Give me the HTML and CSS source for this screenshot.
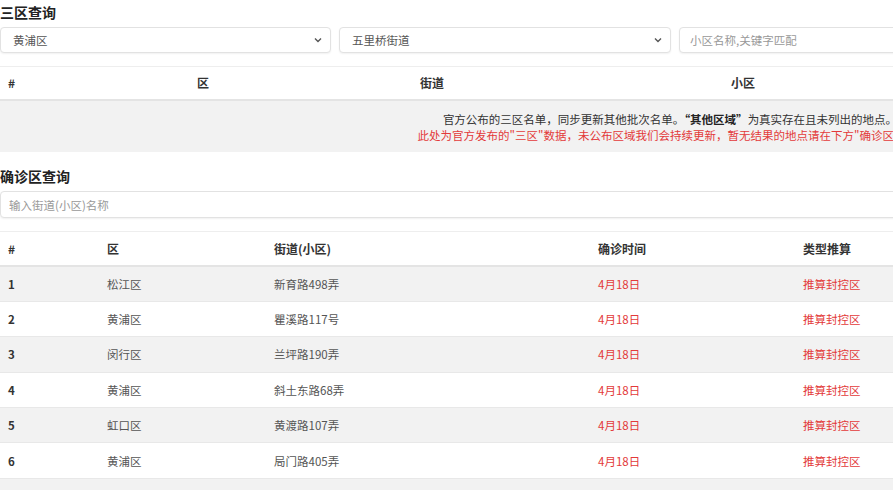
FILE: index.html
```html
<!DOCTYPE html>
<html lang="zh-CN">
<head>
<meta charset="utf-8">
<title>三区查询</title>
<link rel="stylesheet" href="styles.css">
</head>
<body>
<div class="page">
  <h2 class="title">三区查询</h2>
  <div class="filters">
    <div class="select"><span>黄浦区</span><svg class="chev" width="8" height="6" viewBox="0 0 8 6"><path d="M1 1.5 L4 4.5 L7 1.5" fill="none" stroke="#555" stroke-width="1.4"/></svg></div>
    <div class="select"><span>五里桥街道</span><svg class="chev" width="8" height="6" viewBox="0 0 8 6"><path d="M1 1.5 L4 4.5 L7 1.5" fill="none" stroke="#555" stroke-width="1.4"/></svg></div>
    <div class="input"><span class="ph">小区名称,关键字匹配</span></div>
  </div>

  <table class="tbl tbl-area">
    <colgroup><col class="a1"><col class="a2"><col class="a3"><col></colgroup>
    <thead>
      <tr><th>#</th><th>区</th><th>街道</th><th>小区</th></tr>
    </thead>
    <tbody>
      <tr class="notice">
        <td colspan="4">
          <div class="note-black">官方公布的三区名单，同步更新其他批次名单。<b>“其他区域”</b>为真实存在且未列出的地点。</div>
          <div class="note-red">此处为官方发布的"三区"数据，未公布区域我们会持续更新，暂无结果的地点请在下方"确诊区"查询</div>
        </td>
      </tr>
    </tbody>
  </table>

  <h2 class="title title2">确诊区查询</h2>
  <div class="input wide"><span class="ph">输入街道(小区)名称</span></div>

  <table class="tbl tbl-case">
    <colgroup><col class="c1"><col class="c2"><col class="c3"><col class="c4"><col></colgroup>
    <thead>
      <tr><th>#</th><th>区</th><th>街道(小区)</th><th>确诊时间</th><th>类型推算</th></tr>
    </thead>
    <tbody>
      <tr><td class="num">1</td><td>松江区</td><td>新育路498弄</td><td class="red">4月18日</td><td class="red">推算封控区</td></tr>
      <tr><td class="num">2</td><td>黄浦区</td><td>瞿溪路117号</td><td class="red">4月18日</td><td class="red">推算封控区</td></tr>
      <tr><td class="num">3</td><td>闵行区</td><td>兰坪路190弄</td><td class="red">4月18日</td><td class="red">推算封控区</td></tr>
      <tr><td class="num">4</td><td>黄浦区</td><td>斜土东路68弄</td><td class="red">4月18日</td><td class="red">推算封控区</td></tr>
      <tr><td class="num">5</td><td>虹口区</td><td>黄渡路107弄</td><td class="red">4月18日</td><td class="red">推算封控区</td></tr>
      <tr><td class="num">6</td><td>黄浦区</td><td>局门路405弄</td><td class="red">4月18日</td><td class="red">推算封控区</td></tr>
      <tr><td class="num">7</td><td>徐汇区</td><td>宛平南路88弄</td><td class="red">4月18日</td><td class="red">推算封控区</td></tr>
    </tbody>
  </table>
</div>
</body>
</html>
```

FILE: styles.css
```css
html, body {
  margin: 0;
  padding: 0;
  background: #fff;
  overflow: hidden;
}
body {
  font-family: "Noto Sans CJK SC", "Noto Sans", sans-serif;
  font-size: 11.5px;
  color: #555;
}
.page {
  width: 1340px;
}
.title {
  margin: 0;
  font-size: 14px;
  line-height: 24px;
  font-weight: bold;
  color: #222;
}
.title2 {
  margin-top: 12px;
}
.filters {
  display: grid;
  grid-template-columns: 331px 332px 1fr;
  gap: 8px;
  margin-top: 3px;
}
.select, .input {
  height: 26px;
  box-sizing: border-box;
  border: 1px solid #e2e2e2;
  border-radius: 4px;
  box-shadow: 0 1px 2px rgba(0,0,0,0.06);
  display: flex;
  align-items: center;
  justify-content: space-between;
  padding: 0 8px 0 12px;
  color: #555;
  background: #fff;
}
.select span, .input span { line-height: 16px; }
.input { padding-left: 10px; }
.input.wide { margin-top: 3px; height: 27px; padding-left: 8px; }
.ph { color: #999; }
.chev { display: block; }

.tbl {
  width: 100%;
  border-collapse: collapse;
  table-layout: fixed;
}
.tbl th, .tbl td {
  text-align: left;
  padding: 0 8px;
  line-height: 16px;
}
.tbl th {
  font-size: 12px;
  font-weight: bold;
  color: #333;
  border-top: 1px solid #eee;
  border-bottom: 2px solid #e4e4e4;
}
.tbl-area { margin-top: 13px; }
.tbl-area th { height: 32px; }
.a1 { width: 189px; }
.a2 { width: 223px; }
.a3 { width: 311px; }
.notice td {
  background: #f2f2f2;
  text-align: center;
  height: 51px;
  padding: 0;
}
.note-black { color: #333; }
.note-black b { color: #222; }
.note-red { color: #e33a3a; }

.tbl-case { margin-top: 13px; }
.tbl-case th { height: 33px; }
.c1 { width: 99px; }
.c2 { width: 167px; }
.c3 { width: 324px; }
.c4 { width: 205px; }
.tbl-case tbody tr { height: 35.4px; }
.tbl-case tbody td { border-top: 1px solid #e8e8e8; }
.tbl-case tbody tr:nth-child(odd) td { background: #f2f2f2; }
.num { font-weight: bold; color: #333; }
.red { color: #e33a3a; }
```
